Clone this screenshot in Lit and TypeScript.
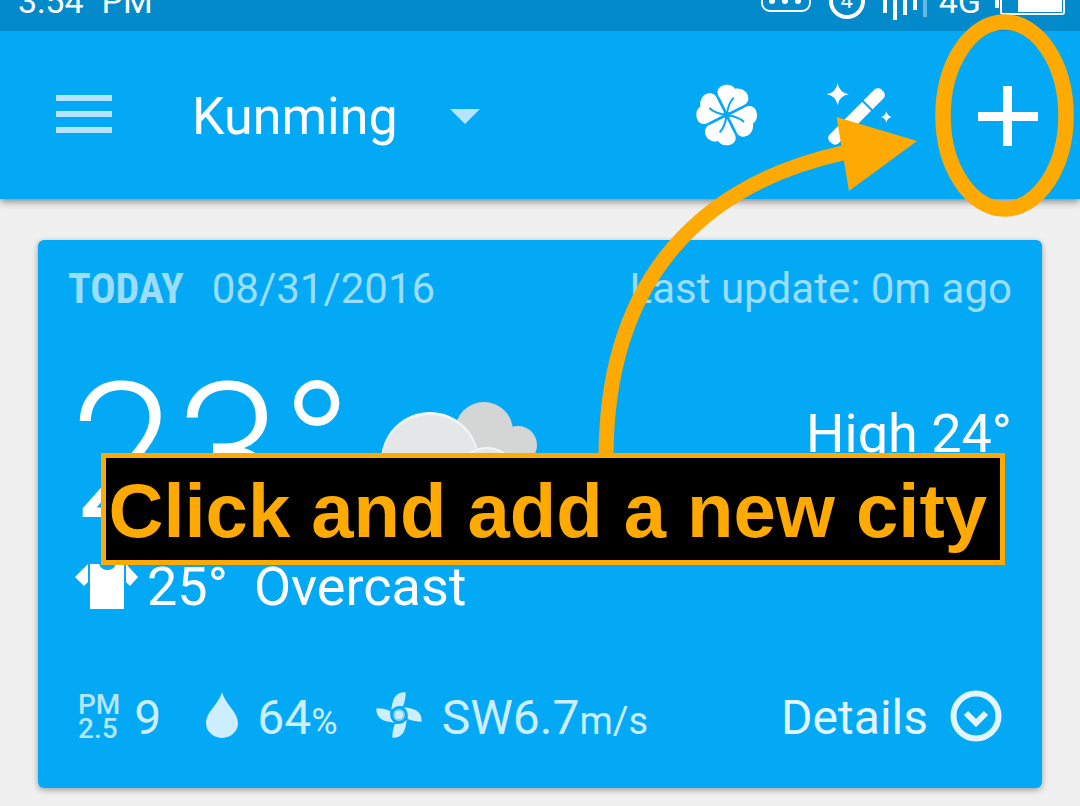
import { LitElement, html, svg, css } from "lit";
import { customElement, property } from "lit/decorators.js";

const PETAL =
  "M0 -10 L-20 -50 C-37 -74 -21 -91 2 -91 C13 -91 21 -86 25 -79 C46 -82 65 -70 65 -50 C65 -39 58 -31 47 -28 L8 -8 Z";

@customElement("status-bar")
export class StatusBar extends LitElement {
  static styles = css`
    :host {
      position: relative;
      z-index: 1;
      display: flex;
      align-items: flex-end;
      height: 31px;
      overflow: hidden;
      background: #038aca;
      color: #fff;
      font-size: 34px;
      line-height: 40px;
    }
    .row {
      flex: 1;
      display: flex;
      justify-content: space-between;
      align-items: center;
      height: 60px;
      flex-shrink: 0;
      padding: 0 15px 0 18px;
    }
    .group {
      display: flex;
      align-items: center;
      gap: 18px;
    }
    .badge {
      box-sizing: border-box;
      width: 36px;
      height: 36px;
      border: 4px solid #fff;
      border-radius: 50%;
      font-size: 22px;
      line-height: 28px;
      text-align: center;
    }
    .net {
      display: flex;
      align-items: center;
      gap: 12px;
    }
    .battery {
      margin-left: -4px;
    }
    svg {
      display: block;
    }
  `;

  render() {
    return html`
      <div class="row">
        <div class="group"><span>3:54</span><span>PM</span></div>
        <div class="group">
          <svg width="50" height="22" viewBox="0 0 50 22" fill="none">
            <rect x="1" y="1" width="48" height="20" rx="8" stroke="#fff" stroke-width="2" />
            <g fill="#fff">
              <circle cx="11" cy="11" r="3" />
              <circle cx="24" cy="11" r="3" />
              <circle cx="37" cy="11" r="3" />
            </g>
          </svg>
          <span class="badge">4</span>
          <div class="net">
            <svg width="44" height="38" viewBox="1 0 44 38" fill="#fff">
              <rect x="1" y="8" width="4" height="23" />
              <rect x="11" y="0" width="4" height="38" />
              <rect x="21" y="5" width="4" height="28" />
              <rect x="31" y="10" width="4" height="18" />
              <rect x="41" y="4" width="4" height="31" opacity=".4" />
            </svg>
            <span>4G</span>
          </div>
          <svg class="battery" width="70" height="28" viewBox="0 0 70 28" fill="none">
            <rect x="0" y="7" width="4" height="14" fill="#fff" />
            <rect x="6" y="1" width="63" height="26" rx="2" stroke="#fff" stroke-width="2" />
            <rect x="23" y="3" width="44" height="22" fill="#fff" />
          </svg>
        </div>
      </div>
    `;
  }
}

@customElement("city-toolbar")
export class CityToolbar extends LitElement {
  @property() city = "Kunming";

  static styles = css`
    :host {
      position: relative;
      display: flex;
      align-items: center;
      height: 168px;
      padding: 0 24px 0 56px;
      background: #04a9f6;
      color: #fff;
      box-shadow: 0 2px 8px rgba(0, 0, 0, 0.5);
    }
    button {
      display: flex;
      align-items: center;
      justify-content: center;
      padding: 0;
      border: 0;
      background: none;
      color: inherit;
    }
    svg {
      display: block;
    }
    .picker {
      display: flex;
      align-items: center;
      gap: 52px;
      margin-left: 80px;
    }
    select {
      appearance: none;
      padding: 4px 0 0;
      border: 0;
      background: none;
      color: inherit;
      font: inherit;
      font-size: 52px;
      line-height: 64px;
    }
    .chevron {
      margin-top: 2px;
    }
    .actions {
      display: flex;
      align-items: center;
      gap: 68px;
      margin-left: auto;
    }
    .add {
      width: 96px;
      height: 98px;
      padding-top: 2px;
    }
  `;

  render() {
    return html`
      <button aria-label="Menu">
        <svg width="56" height="40" viewBox="0 0 56 40" fill="#b4e5fd">
          <rect width="56" height="6" />
          <rect y="16" width="56" height="6" />
          <rect y="32" width="56" height="6" />
        </svg>
      </button>
      <label class="picker">
        <select aria-label="City">
          <option>${this.city}</option>
        </select>
        <svg class="chevron" width="30" height="15" viewBox="0 0 30 15"><path d="M0 0H30L15 15Z" fill="#b4e5fd" /></svg>
      </label>
      <div class="actions">
        <button aria-label="Clover">
          <svg width="64" height="64" viewBox="-98 -96 192 192">
            ${[0, 90, 180, 270].map((a) => svg`<path transform="rotate(${a})" d=${PETAL} fill="#fff" />`)}
            ${[0, 90, 180, 270].map(
              (a) => svg`<path transform="rotate(${a})" d="M0 0C3 -22 9 -40 21 -52"
                fill="none" stroke="#04a9f6" stroke-width="6" />`
            )}
          </svg>
        </button>
        <button aria-label="Effects">
          <svg width="66" height="66" viewBox="0 0 198 198" fill="#fff">
            <path d="M35 4Q40 32 68 37Q40 42 35 70Q30 42 2 37Q30 32 35 4Z" />
            <path d="M181 88Q184 102 197 105Q184 108 181 122Q178 108 165 105Q178 102 181 88Z" />
            <g transform="translate(93 102) rotate(-45)">
              <rect x="-112" y="-19" width="220" height="38" rx="15" />
              <rect x="41" y="-22" width="6" height="44" fill="#04a9f6" />
            </g>
          </svg>
        </button>
        <button class="add" aria-label="Add city">
          <svg width="60" height="60" viewBox="0 0 60 60" fill="#fff">
            <rect x="25" width="9" height="60" />
            <rect y="26" width="60" height="9" />
          </svg>
        </button>
      </div>
    `;
  }
}

@customElement("weather-card")
export class WeatherCard extends LitElement {
  static styles = css`
    :host {
      display: block;
      padding: 25px 30px 43px;
      border-radius: 6px;
      background: #04a9f6;
      color: #fff;
      box-shadow: 0 2px 6px rgba(0, 0, 0, 0.35);
    }
    svg {
      display: block;
      flex: none;
    }
    .row {
      display: flex;
      align-items: center;
      white-space: nowrap;
    }
    .meta {
      gap: 28px;
      font-size: 42px;
      line-height: 48px;
      color: #9bddfc;
    }
    .today {
      font-family: "Roboto Condensed", "Liberation Sans Narrow", Roboto, sans-serif;
      font-weight: 700;
    }
    .end {
      margin-left: auto;
    }
    .now {
      align-items: flex-start;
      margin-top: 39px;
    }
    .temp {
      padding-left: 2px;
      font-size: 190px;
      line-height: 200px;
      font-weight: 300;
    }
    .cloud,
    .high {
      margin-top: 50px;
    }
    .cloud {
      margin-left: 28px;
    }
    .high,
    .feels {
      font-size: 54px;
      line-height: 64px;
    }
    .feels {
      margin-top: 3px;
      padding-left: 7px;
      gap: 8px;
    }
    .sky {
      margin-left: 18px;
    }
    .stats {
      height: 56px;
      margin-top: 70px;
      padding: 0 10px;
      font-size: 48px;
      color: #cdeefe;
    }
    .stat {
      display: flex;
      align-items: center;
    }
    .pm {
      gap: 14px;
    }
    .hum {
      margin-left: 44px;
      gap: 18px;
    }
    .wind {
      margin-left: 38px;
      gap: 20px;
    }
    .pm-label {
      font-size: 28px;
      line-height: 24px;
      font-weight: 500;
      color: #b4e6fd;
    }
    small {
      font-size: 36px;
    }
    .wind small {
      font-size: 38px;
    }
    a {
      display: flex;
      align-items: center;
      gap: 22px;
      margin-left: auto;
      color: #e3f5fe;
      text-decoration: none;
    }
  `;

  render() {
    return html`
      <div class="row meta">
        <span class="today">TODAY</span><span>08/31/2016</span>
        <span class="end">Last update: 0m ago</span>
      </div>
      <div class="row now">
        <span class="temp">23°</span>
        <svg class="cloud" width="160" height="110" viewBox="0 0 160 110">
          <g fill="#d4d6d6">
            <circle cx="103" cy="29" r="29" />
            <circle cx="137" cy="43" r="19" />
            <rect x="90" y="30" width="60" height="40" />
          </g>
          <circle cx="49" cy="59" r="49" fill="#f3f5f5" />
          <circle cx="49" cy="61" r="48" fill="#e3e7e8" />
          <circle cx="106" cy="75" r="30" fill="#f5f6f6" />
          <circle cx="106" cy="77" r="30" fill="#e3e7e8" />
        </svg>
        <span class="high end">High 24°</span>
      </div>
      <div class="row feels">
        <svg width="64" height="48" viewBox="0 0 64 48" fill="#fff">
          <path d="M15 1H24A9 9 0 0 0 41 1H49V46H15Z" />
          <path d="M13 1V19L9 23L0 14Z" />
          <path d="M51 1V19L55 23L63 14Z" />
        </svg>
        <span>25°</span><span class="sky">Overcast</span>
      </div>
      <div class="row stats">
        <div class="stat pm"><span class="pm-label">PM<br />2.5</span><span>9</span></div>
        <div class="stat hum">
          <svg width="34" height="50" viewBox="0 0 34 50">
            <path d="M17 0C20 12 33 20 33 31A16 15 0 0 1 1 31C1 20 14 12 17 0Z" fill="#cdeefe" />
          </svg>
          <span>64<small>%</small></span>
        </div>
        <div class="stat wind">
          <svg width="46" height="50" viewBox="-69 -69 138 150">
            ${[0, 90, 180, 270].map(
              (a) => svg`<path transform="rotate(${a})" fill="#cdeefe"
                d="M-23 -14C-20 -46 -12 -69 20 -68C20 -54 18 -40 12 -26Q-10 -30 -23 -14Z" />`
            )}
            <circle r="17" fill="#cdeefe" stroke="#04a9f6" stroke-width="7" />
            <circle r="16" fill="none" stroke="#8fd9fc" stroke-width="4" />
          </svg>
          <span>SW6.7<small>m/s</small></span>
        </div>
        <a href="#details">
          Details
          <svg width="52" height="54" viewBox="0 0 52 54" fill="none" stroke="currentColor">
            <circle cx="26" cy="26" r="22.5" stroke-width="6" />
            <path d="M16 23L26 33L36 23" stroke-width="6" />
          </svg>
        </a>
      </div>
    `;
  }
}

@customElement("app-root")
export class AppRoot extends LitElement {
  static styles = css`
    :host {
      position: relative;
      display: flex;
      flex-direction: column;
      min-height: 100vh;
      overflow: hidden;
      background: #f0f0f0;
      font-family: Roboto, sans-serif;
    }
    main {
      padding: 41px 38px 18px;
    }
    .pointer {
      position: absolute;
      z-index: 2;
      top: 0;
      right: 0;
      pointer-events: none;
    }
    .callout {
      position: absolute;
      z-index: 2;
      top: 453px;
      right: 75px;
      margin: 0;
      padding: 10px 13px 6px 3px;
      border: 5px solid #ffaa02;
      background: #000;
      color: #ffaa02;
      font: 700 76px/86px "Liberation Sans", Arial, sans-serif;
      white-space: nowrap;
    }
  `;

  render() {
    return html`
      <status-bar></status-bar>
      <city-toolbar city="Kunming"></city-toolbar>
      <main><weather-card></weather-card></main>
      <svg class="pointer" width="500" height="460" viewBox="580 0 500 460" fill="none" stroke="#ffaa02">
        <path d="M606 458C606 275 705 183 845 152.500" stroke-width="15" />
        <path d="M836.500 117L917 141L849 191Z" fill="#ffaa02" stroke="none" />
        <ellipse cx="1004.500" cy="115.500" rx="61.500" ry="93.500" stroke-width="15.500" />
      </svg>
      <p class="callout">Click and add a new city</p>
    `;
  }
}
